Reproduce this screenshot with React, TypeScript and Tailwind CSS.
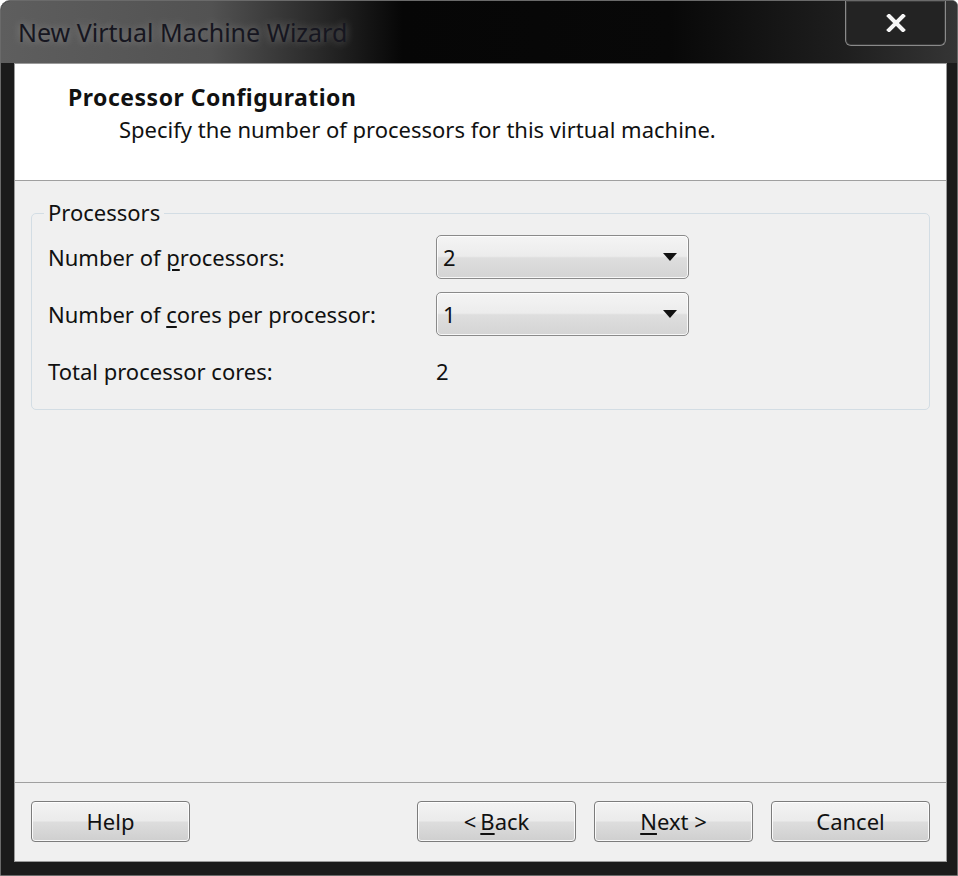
import React from 'react'

const font = { fontFamily: '"Noto Sans", "Open Sans", sans-serif' }

function Combo({ value }: { value: string }) {
  return (
    <div className="w-[253px] h-[44px] rounded-[5px] border border-[#8a8a8a] bg-[linear-gradient(to_bottom,#f4f4f4_0%,#ececec_48%,#dedede_52%,#d4d4d4_100%)] flex items-center justify-between pl-[6px] pr-[10px] shadow-[inset_0_0_0_1px_rgba(255,255,255,0.8)]">
      <span className="text-[22px] text-[#111]">{value}</span>
      <svg width="16" height="10" viewBox="0 0 16 10">
        <path d="M1 1 L15 1 L8 9 Z" fill="#111" />
      </svg>
    </div>
  )
}

function Button({ children }: { children: React.ReactNode }) {
  return (
    <button className="w-[159px] h-[41px] rounded-[4px] border border-[#7c7c7c] bg-[linear-gradient(to_bottom,#f3f3f3_0%,#ebebeb_48%,#dddddd_52%,#cfcfcf_100%)] shadow-[inset_0_0_0_1px_rgba(255,255,255,0.85)] text-[22px] text-[#111] flex items-center justify-center">
      {children}
    </button>
  )
}

export default function App() {
  return (
    <div style={font} className="w-[958px] h-[876px] bg-[#1b1b1b] rounded-tl-[10px] rounded-tr-[6px] border border-[#6a6a6a] flex flex-col overflow-hidden">
      {/* Title bar */}
      <div className="h-[62px] shrink-0 flex items-start justify-between bg-[linear-gradient(to_right,#5e5e5e_0%,#525252_22%,#2a2a2a_33%,#060606_42%,#080808_70%,#1e1e1e_88%,#353535_100%)]">
        <div className="pl-[17px] pt-[13px] text-[25px] text-[#161620] [text-shadow:0_0_8px_rgba(200,200,200,0.45)]">
          New Virtual Machine Wizard
        </div>
        <div className="mr-[11px] w-[101px] h-[45px] rounded-b-[6px] border border-t-0 border-[#8a8a8a] bg-[#232323] shadow-[inset_0_0_0_1px_#3a3a3a] flex items-center justify-center">
          <svg width="20" height="18" viewBox="0 0 20 18">
            <path d="M3 2 L17 16 M17 2 L3 16" stroke="#f4f4f4" strokeWidth="4" strokeLinecap="square" />
          </svg>
        </div>
      </div>

      {/* Client area */}
      <div className="flex-1 ml-[13px] mr-[10px] mb-[13px] border border-[#9a9a9a] flex flex-col bg-[#f0f0f0]">
        <div className="h-[117px] shrink-0 bg-white border-b border-[#a0a0a0] pl-[53px] pt-[19px]">
          <div className="text-[23px] font-bold tracking-[0.5px] text-[#111] leading-[28px]">Processor Configuration</div>
          <div className="text-[22px] text-[#111] leading-[28px] pl-[51px] pt-[4px]">
            Specify the number of processors for this virtual machine.
          </div>
        </div>

        <div className="flex-1 px-[16px] pt-[32px]">
          <div className="relative border border-[#d3dde4] rounded-[5px] h-[197px] pl-[16px] pt-[21px]">
            <span className="absolute -top-[16px] left-[12px] px-[4px] bg-[#f0f0f0] text-[22px] text-[#111] leading-[28px]">
              Processors
            </span>
            <div className="flex flex-col gap-[13px]">
              <div className="flex items-center">
                <div className="w-[388px] text-[22px] text-[#111]">
                  Number of <span className="underline underline-offset-[3px]">p</span>rocessors:
                </div>
                <Combo value="2" />
              </div>
              <div className="flex items-center">
                <div className="w-[388px] text-[22px] text-[#111]">
                  Number of <span className="underline underline-offset-[3px]">c</span>ores per processor:
                </div>
                <Combo value="1" />
              </div>
              <div className="flex items-center pt-[6px]">
                <div className="w-[388px] text-[22px] text-[#111]">Total processor cores:</div>
                <div className="text-[22px] text-[#111]">2</div>
              </div>
            </div>
          </div>
        </div>

        <div className="h-[79px] shrink-0 border-t border-[#a0a0a0] flex items-center px-[16px] pb-[1px]">
          <Button>Help</Button>
          <div className="flex-1" />
          <div className="flex gap-[18px]">
            <Button>
              &lt; <span className="underline underline-offset-[3px] ml-[4px]">B</span>ack
            </Button>
            <Button>
              <span className="underline underline-offset-[3px]">N</span>ext &gt;
            </Button>
            <Button>Cancel</Button>
          </div>
        </div>
      </div>
    </div>
  )
}
